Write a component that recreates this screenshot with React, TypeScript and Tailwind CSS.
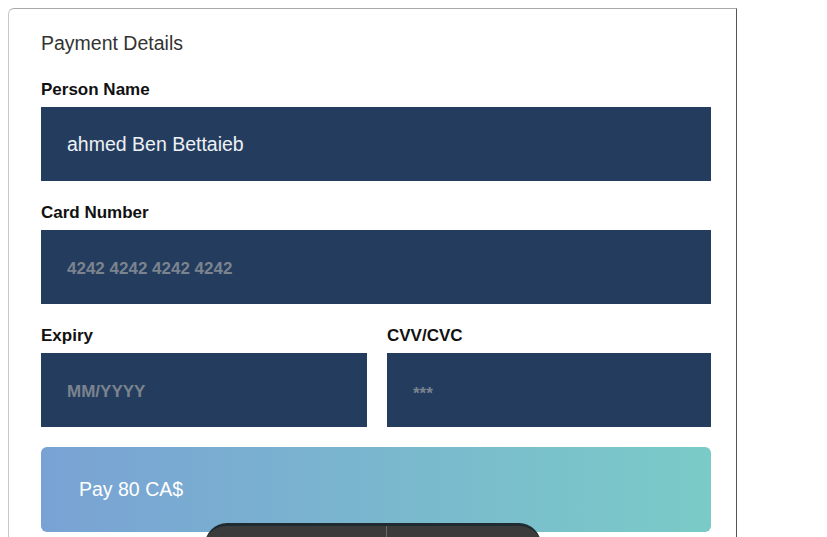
import React from 'react';

const fieldClass =
  'w-full h-[74px] bg-[#243d5f] px-[26px] text-[19.5px] text-[#eef1f5] outline-none placeholder:text-[#7b838e] placeholder:text-[17px] placeholder:font-bold';

const labelClass = 'block text-[17px] font-bold leading-[20px] text-[#111]';

const App: React.FC = () => {
  return (
    <div className="relative h-[537px] w-[827px] overflow-hidden bg-white font-['Liberation_Sans',Arial,sans-serif]">
      <div className="ml-2 mt-2 h-[560px] w-[729px] rounded-tl-[6px] border-t border-l border-r border-t-[#a8a8a8] border-l-[#c8c8c8] border-r-[#555] pl-[32px] pr-[25px] pt-[22px]">
        <h1 className="text-[19.5px] leading-[24px] text-[#333]">Payment Details</h1>

        <label className={`${labelClass} mt-[25px]`}>Person Name</label>
        <input className={`${fieldClass} mt-[7px] block`} defaultValue="ahmed Ben Bettaieb" />

        <label className={`${labelClass} mt-[22px]`}>Card Number</label>
        <input className={`${fieldClass} mt-[7px] block`} placeholder="4242 4242 4242 4242" />

        <div className="mt-[22px] flex gap-[20px]">
          <div className="w-[326px]">
            <label className={labelClass}>Expiry</label>
            <input className={`${fieldClass} mt-[7px] block h-[73px]`} placeholder="MM/YYYY" />
          </div>
          <div className="flex-1">
            <label className={labelClass}>CVV/CVC</label>
            <input
              className={`${fieldClass} mt-[7px] block h-[73px] px-[25px] pt-[4px] placeholder:text-[15px]`}
              placeholder="***"
            />
          </div>
        </div>

        <button className="mt-[20px] flex h-[85px] w-full items-center rounded-[6px] bg-gradient-to-r from-[#79a2d4] to-[#7acbc7] pl-[38px] text-[19.5px] text-white">
          Pay 80 CA$
        </button>
      </div>

      <div className="absolute left-[205px] top-[523px] flex h-[40px] w-[336px] overflow-hidden rounded-t-[22px] border-t-[3px] border-[#1f2b31] bg-[#3b3b3b]">
        <div className="w-[182px] border-r border-[#6a6a6a]" />
        <div className="flex-1" />
      </div>
    </div>
  );
};

export default App;
